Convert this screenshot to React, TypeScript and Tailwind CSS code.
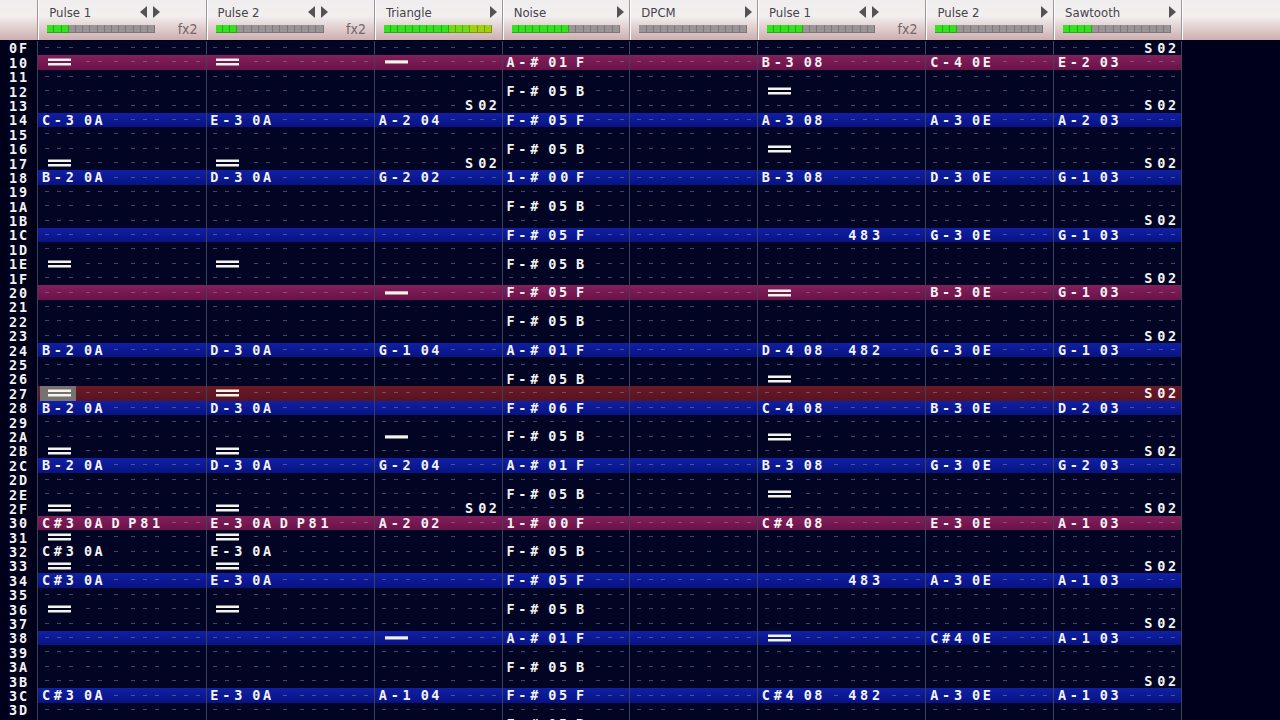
import clsx from 'clsx'

interface Channel {
  name: string
  level: number
  columns: number
}

const channels: Channel[] = [
  { name: 'Pulse 1', level: 3, columns: 2 },
  { name: 'Pulse 2', level: 3, columns: 2 },
  { name: 'Triangle', level: 15, columns: 1 },
  { name: 'Noise', level: 8, columns: 1 },
  { name: 'DPCM', level: 0, columns: 1 },
  { name: 'Pulse 1', level: 5, columns: 2 },
  { name: 'Pulse 2', level: 3, columns: 1 },
  { name: 'Sawtooth', level: 4, columns: 1 },
]

const FIRST_ROW = 0x0f
const LAST_ROW = 0x3e
const CURSOR_ROW = 0x27

// cells per channel: "note inst vol fx1 fx2", '=' is a release, '_' a halt, '.' an empty field
const pattern: Record<string, string[]> = {
  '0F': ['', '', '', '', '', '', '', '. . . S02'],
  '10': ['=', '=', '_', 'A-# 01 F', '', 'B-3 08', 'C-4 0E', 'E-2 03'],
  '12': ['', '', '', 'F-# 05 B', '', '='],
  '13': ['', '', '. . . S02', '', '', '', '', '. . . S02'],
  '14': ['C-3 0A', 'E-3 0A', 'A-2 04', 'F-# 05 F', '', 'A-3 08', 'A-3 0E', 'A-2 03'],
  '16': ['', '', '', 'F-# 05 B', '', '='],
  '17': ['=', '=', '. . . S02', '', '', '', '', '. . . S02'],
  '18': ['B-2 0A', 'D-3 0A', 'G-2 02', '1-# 00 F', '', 'B-3 08', 'D-3 0E', 'G-1 03'],
  '1A': ['', '', '', 'F-# 05 B'],
  '1B': ['', '', '', '', '', '', '', '. . . S02'],
  '1C': ['', '', '', 'F-# 05 F', '', '. . . 483', 'G-3 0E', 'G-1 03'],
  '1E': ['=', '=', '', 'F-# 05 B'],
  '1F': ['', '', '', '', '', '', '', '. . . S02'],
  '20': ['', '', '_', 'F-# 05 F', '', '=', 'B-3 0E', 'G-1 03'],
  '22': ['', '', '', 'F-# 05 B'],
  '23': ['', '', '', '', '', '', '', '. . . S02'],
  '24': ['B-2 0A', 'D-3 0A', 'G-1 04', 'A-# 01 F', '', 'D-4 08 . 482', 'G-3 0E', 'G-1 03'],
  '26': ['', '', '', 'F-# 05 B', '', '='],
  '27': ['=', '=', '', '', '', '', '', '. . . S02'],
  '28': ['B-2 0A', 'D-3 0A', '', 'F-# 06 F', '', 'C-4 08', 'B-3 0E', 'D-2 03'],
  '2A': ['', '', '_', 'F-# 05 B', '', '='],
  '2B': ['=', '=', '', '', '', '', '', '. . . S02'],
  '2C': ['B-2 0A', 'D-3 0A', 'G-2 04', 'A-# 01 F', '', 'B-3 08', 'G-3 0E', 'G-2 03'],
  '2E': ['', '', '', 'F-# 05 B', '', '='],
  '2F': ['=', '=', '. . . S02', '', '', '', '', '. . . S02'],
  '30': ['C#3 0A D P81', 'E-3 0A D P81', 'A-2 02', '1-# 00 F', '', 'C#4 08', 'E-3 0E', 'A-1 03'],
  '31': ['=', '='],
  '32': ['C#3 0A', 'E-3 0A', '', 'F-# 05 B'],
  '33': ['=', '=', '', '', '', '', '', '. . . S02'],
  '34': ['C#3 0A', 'E-3 0A', '', 'F-# 05 F', '', '. . . 483', 'A-3 0E', 'A-1 03'],
  '36': ['=', '=', '', 'F-# 05 B'],
  '37': ['', '', '', '', '', '', '', '. . . S02'],
  '38': ['', '', '_', 'A-# 01 F', '', '=', 'C#4 0E', 'A-1 03'],
  '3A': ['', '', '', 'F-# 05 B'],
  '3B': ['', '', '', '', '', '', '', '. . . S02'],
  '3C': ['C#3 0A', 'E-3 0A', 'A-1 04', 'F-# 05 F', '', 'C#4 08 . 482', 'A-3 0E', 'A-1 03'],
  '3E': ['', '', '', 'F-# 05 B'],
}

const rowLabels = Array.from({ length: LAST_ROW - FIRST_ROW + 1 }, (_, i) =>
  (FIRST_ROW + i).toString(16).toUpperCase().padStart(2, '0')
)

const rowColor = (row: number) => {
  if (row === CURSOR_ROW) return 'bg-linear-to-b from-[#6c1a28] to-[#571321]'
  if (row % 16 === 0) return 'bg-linear-to-b from-[#82205c] to-[#6b1149]'
  if (row % 4 === 0) return 'bg-linear-to-b from-[#1020a4] to-[#081282]'
  return 'bg-[#020423]'
}

const Meter = ({ level }: { level: number }) => (
  <div className="flex h-2 w-[108px]">
    {Array.from({ length: 15 }, (_, i) => (
      <div
        key={i}
        className={clsx(
          'h-2 flex-1 border-r border-b',
          i >= level && 'border-[#7d7779] bg-[#9a9496]',
          i < level && i < 9 && 'border-[#2aa61a] bg-[#36df20]',
          i < level && i >= 9 && i < 12 && 'border-[#5ba30c] bg-[#72d914]',
          i < level && i >= 12 && 'border-[#7c9808] bg-[#a2d00c]'
        )}
      />
    ))}
  </div>
)

const Arrow = ({ left }: { left?: boolean }) => (
  <svg width="7" height="12" viewBox="0 0 7 12" fill="#555254">
    <path d={left ? 'M7 0v12L0 6z' : 'M0 0v12l7-6z'} />
  </svg>
)

const ChannelHeader = ({ channel }: { channel: Channel }) => (
  <div
    className={clsx(
      'flex h-10 shrink-0 flex-col border-l border-[#9d9496] pl-[9px] shadow-[inset_1px_0_0_#fff]',
      channel.columns === 2 ? 'w-[168.4px]' : 'w-[127.7px]'
    )}
  >
    <div className="flex h-6 items-center justify-between pl-[2px]">
      <span className="pt-px text-[13px] leading-[23px] text-[#45434a]">{channel.name}</span>
      <div className={clsx('flex gap-[6px]', channel.columns === 2 ? 'pr-[46px]' : 'pr-[5px]')}>
        {channel.columns === 2 && <Arrow left />}
        <Arrow />
      </div>
    </div>
    <div className="flex items-center justify-between pt-px pr-2">
      <Meter level={channel.level} />
      {channel.columns === 2 && <span className="h-2 text-[14px] leading-2 text-[#756669]">fx2</span>}
    </div>
  </div>
)

const Field = ({ value, width }: { value?: string; width: number }) => (
  <div className="flex">
    {Array.from({ length: width }, (_, i) =>
      !value || value === '.' ? (
        <span key={i} className="flex w-[11.9px] items-center justify-center pb-px pl-[2px]">
          <span className="h-px w-1 bg-[#8f97b0]/45" />
        </span>
      ) : (
        <span key={i} className={clsx('w-[11.9px] text-center', value[i] === '0' && 'pl-[2.5px]')}>
          {value[i]}
        </span>
      )
    )}
  </div>
)

const Note = ({ value }: { value?: string }) => {
  if (value === '=' || value === '_') {
    return (
      <div className="flex w-[35.7px] items-center justify-center pl-[3px]">
        <svg width="23" height="8" viewBox="0 0 23 8" fill="#f4f4e8">
          {value === '=' ? <path d="M0 .4h23v2.5H0zM0 5h23v2.5H0z" /> : <path d="M0 2.3h23v3.2H0z" />}
        </svg>
      </div>
    )
  }
  return <Field value={value} width={3} />
}

const Cell = ({ channel, data, selected }: { channel: Channel; data?: string; selected: boolean }) => {
  const [note, inst, vol, fx1, fx2] = (data ?? '').split(' ')

  return (
    <div
      className={clsx(
        'flex h-[14.4px] shrink-0 gap-[5px] border-l border-[#3c4258] pl-[1.9px]',
        channel.columns === 2 ? 'w-[168.4px]' : 'w-[127.7px]'
      )}
    >
      <div className={clsx('flex', selected && 'bg-[#77716f]')}>
        <Note value={note} />
      </div>
      <Field value={inst} width={2} />
      <Field value={vol} width={1} />
      <Field value={fx1} width={3} />
      {channel.columns === 2 && <Field value={fx2} width={3} />}
    </div>
  )
}

const App = () => {
  return (
    <div className="flex h-[720px] w-[1280px] flex-col overflow-hidden bg-[#00001b]">
      <div className="flex h-10 shrink-0 bg-linear-to-b from-[#efedee] via-[#f3efef] via-40% to-[#cdaeb0] font-['DejaVu_Sans_Condensed','DejaVu_Sans',sans-serif] [font-stretch:condensed]">
        <div className="w-[37.2px] shrink-0" />
        {channels.map((channel, i) => (
          <ChannelHeader key={i} channel={channel} />
        ))}
        <div className="flex-1 border-l border-[#9d9496] shadow-[inset_1px_0_0_#fff]" />
      </div>
      <div className="flex flex-col pt-[0.8px] font-['DejaVu_Sans_Mono',monospace] text-[13.5px] leading-[14.4px] font-bold text-[#f3f3f2]">
        {rowLabels.map((label, i) => (
          <div key={label} className="flex h-[14.4px] shrink-0">
            <div className="flex w-[37.2px] shrink-0 bg-[#00001b] pt-[0.6px] pl-[8px]">
              <span className="w-[10px] text-center">{label[0]}</span>
              <span className="w-[10px] text-center">{label[1]}</span>
            </div>
            <div className={clsx('flex', rowColor(FIRST_ROW + i))}>
              {channels.map((channel, c) => (
                <Cell
                  key={c}
                  channel={channel}
                  data={pattern[label]?.[c]}
                  selected={FIRST_ROW + i === CURSOR_ROW && c === 0}
                />
              ))}
            </div>
            <div className="w-px shrink-0 bg-[#3c4258]" />
          </div>
        ))}
      </div>
    </div>
  )
}

export default App
